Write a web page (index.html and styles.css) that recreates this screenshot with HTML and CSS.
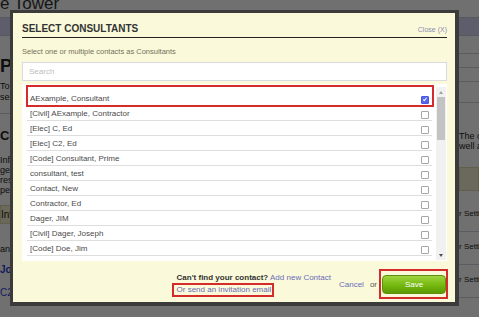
FILE: index.html
```html
<!DOCTYPE html>
<html lang="en">
<head>
    <meta charset="UTF-8">
    <meta name="viewport" content="width=device-width, initial-scale=1.0">
    <title>Select Consultants</title>
    <link rel="stylesheet" href="styles.css">
</head>
<body>

    <div class="page">
        <div class="page-title">e Tower</div>
        <div class="page-nav"></div>
        <div class="page-body">
            <div class="page-left">
                <h2>Project Consultants</h2>
                <p class="intro">To add consultants to this project<br>send them an invitation email.</p>
                <h3>Consultants</h3>
                <p class="small">Information about consultants<br>general contractors and the<br>responsible parties that are<br>performing the work.</p>
                <div class="tan-box">Internal notes</div>
                <p class="small spaced">and others</p>
                <a class="page-link bold" href="#">Joseph Dager</a>
                <a class="page-link" href="#">C2</a>
            </div>
            <div class="page-right">
                <div class="right-row"></div>
                <div class="right-row"></div>
                <div class="right-row"></div>
                <div class="right-row tall"></div>
                <p class="small">The consultants listed here<br>well as everybody else</p>
                <div class="tan-box wide"></div>
                <div class="right-row text">r Settings</div>
                <div class="right-row text">r Settings</div>
                <div class="right-row text">r Settings</div>
            </div>
        </div>
    </div>

    <div class="modal">
        <div class="modal-head">
            <h1>SELECT CONSULTANTS</h1>
            <a href="#" class="close">Close (X)</a>
        </div>
        <p class="hint">Select one or multiple contacts as Consultants</p>
        <input type="text" class="search" placeholder="Search">

        <div class="list-wrap">
            <ul class="contact-list">
                <li class="marked"><span>AExample, Consultant</span><span class="check checked"></span></li>
                <li><span>[Civil] AExample, Contractor</span><span class="check"></span></li>
                <li><span>[Elec] C, Ed</span><span class="check"></span></li>
                <li><span>[Elec] C2, Ed</span><span class="check"></span></li>
                <li><span>[Code] Consultant, Prime</span><span class="check"></span></li>
                <li><span>consultant, test</span><span class="check"></span></li>
                <li><span>Contact, New</span><span class="check"></span></li>
                <li><span>Contractor, Ed</span><span class="check"></span></li>
                <li><span>Dager, JIM</span><span class="check"></span></li>
                <li><span>[Civil] Dager, Joseph</span><span class="check"></span></li>
                <li><span>[Code] Doe, Jim</span><span class="check"></span></li>
            </ul>
            <div class="scrollbar">
                <span class="arrow up"></span>
                <div class="thumb"></div>
                <span class="arrow down"></span>
            </div>
        </div>

        <div class="modal-foot">
            <div class="foot-text">
                <div><b>Can't find your contact?</b> <a href="#">Add new Contact</a></div>
                <a href="#" class="invite marked-inline">Or send an invitation email</a>
            </div>
            <a href="#" class="cancel">Cancel</a>
            <span class="or">or</span>
            <button class="save-btn">Save</button>
        </div>
    </div>

</body>
</html>
```

FILE: styles.css
```css
body {
    margin: 0;
    font-family: "Liberation Sans", Arial, sans-serif;
    background: #fff;
    overflow: hidden;
    height: 317px;
}
.page {
    width: 479px;
    height: 317px;
    overflow: hidden;
    color: #222;
}
.page-title {
    font-size: 17px;
    line-height: 17px;
    margin-top: -5px;
    color: #333;
}
.page-nav {
    height: 17px;
    margin-top: 5px;
    background: #d4d4f4;
    border-top: 1px solid #c8c8e0;
    border-bottom: 1px solid #c8c8e0;
}
.page-body {
    display: flex;
    justify-content: space-between;
}
.page-left {
    width: 200px;
}
.page-left h2 {
    font-size: 18px;
    margin: 20px 0 4px;
}
.page-left h3 {
    font-size: 13px;
    margin: 0 0 12px;
    padding-top: 14px;
    border-top: 1px solid #ccc;
}
.intro {
    font-size: 9px;
    line-height: 11px;
    margin: 0 0 10px;
}
.small {
    font-size: 9px;
    line-height: 10px;
    margin: 0 0 10px;
}
.spaced {
    margin-top: 20px;
}
.tan-box {
    background: #f2eed0;
    border: 1px solid #dcd6a8;
    font-size: 10px;
    padding: 3px 0;
    margin-bottom: 18px;
}
.page-link {
    display: block;
    color: #2a3cd8;
    font-size: 10px;
    margin-bottom: 12px;
    text-decoration: none;
}
.page-link.bold {
    font-weight: bold;
}
.page-right {
    width: 20px;
    padding-top: 4px;
}
.page-right .small {
    margin: 28px 0 16px;
    white-space: nowrap;
}
.right-row {
    height: 13px;
    border-bottom: 1px solid #cfcfe0;
}
.right-row.tall {
    height: 20px;
}
.right-row.text {
    height: 20px;
    line-height: 30px;
    padding-bottom: 12px;
    font-size: 8px;
    white-space: nowrap;
}
.tan-box.wide {
    height: 16px;
    margin: 0 0 8px;
}

/* modal; the wide shadow dims the page behind it */
.modal {
    position: absolute;
    left: 10px;
    top: 10px;
    width: 425px;
    height: 273px;
    padding: 10px 8px 6px 9px;
    background: #fafadb;
    border: solid #3b3b3b;
    border-width: 3px 4px 4px 3px;
    box-shadow: 0 0 0 600px #0000008f;
    font-size: 8px;
    color: #444;
}
.modal-head {
    display: flex;
    justify-content: space-between;
    align-items: center;
    border-bottom: 1px solid #222;
    padding-bottom: 2px;
}
.modal-head h1 {
    margin: 0;
    font-size: 10px;
    line-height: 12px;
    color: #333;
}
.close {
    font-size: 7px;
    color: #8a8ab0;
    text-decoration: none;
}
.hint {
    margin: 9px 0 0;
    font-size: 7.5px;
    line-height: 10px;
    color: #76705a;
}
.search {
    display: block;
    box-sizing: border-box;
    width: 100%;
    height: 19px;
    margin: 5px 0 3px;
    padding: 0 6px;
    border: 1px solid #dadae4;
    background: #fff;
    font-family: inherit;
    font-size: 8px;
    outline: none;
}
.search::placeholder {
    color: #bcbcbc;
}
.list-wrap {
    display: flex;
    height: 177px;
    background: #fff;
}
.contact-list {
    flex: 1;
    list-style: none;
    margin: 0;
    padding: 7px 4px 0 5px;
    overflow: hidden;
}
.contact-list li {
    display: flex;
    justify-content: space-between;
    align-items: center;
    height: 14px;
    padding: 0 3px;
    border-bottom: 1px solid #dedede;
    color: #4a4a4a;
    position: relative;
}
.contact-list li .check {
    margin-top: 3px;
}
.marked::before {
    content: "";
    position: absolute;
    left: -1px;
    right: -2px;
    top: -6px;
    bottom: -2px;
    border: 2px solid #d62b2b;
}
.check {
    width: 6px;
    height: 6px;
    border: 1px solid #a6a6a6;
    border-radius: 1px;
    background: #fff;
}
.check.checked {
    border-color: #4b5ae0;
    background: #5866ee;
    position: relative;
}
.check.checked::after {
    content: "";
    position: absolute;
    left: 2px;
    top: 0;
    width: 1px;
    height: 3px;
    border: solid #fff;
    border-width: 0 1px 1px 0;
    transform: rotate(40deg);
}
.scrollbar {
    width: 10px;
    margin: 3px 1px 1px 0;
    background: #f1f1f1;
    display: flex;
    flex-direction: column;
    align-items: center;
}
.arrow {
    width: 0;
    height: 0;
    border-left: 2.5px solid transparent;
    border-right: 2.5px solid transparent;
    margin: 4px 0 3px;
}
.arrow.up {
    border-bottom: 3px solid #a3a3a3;
}
.arrow.down {
    border-top: 3px solid #505050;
    margin-top: auto;
}
.thumb {
    width: 8px;
    height: 43px;
    background: #c3c3c3;
}

/* footer */
.modal-foot {
    display: flex;
    justify-content: flex-end;
    align-items: center;
    margin-top: 11px;
    padding-right: 1px;
}
.foot-text {
    line-height: 12px;
}
.foot-text b {
    color: #333;
}
.foot-text a,
.cancel {
    color: #6a6ab8;
    text-decoration: none;
}
.invite {
    position: relative;
}
.marked-inline::after,
.save-btn::after {
    content: "";
    position: absolute;
    border: 2px solid #d62b2b;
}
.marked-inline::after {
    left: -5px;
    right: -3px;
    top: -2px;
    bottom: -3px;
}
.cancel {
    margin-left: 8px;
}
.or {
    margin: 0 5px 0 6px;
    color: #555;
}
.save-btn {
    position: relative;
    width: 64px;
    height: 19px;
    border: 1px solid #5d9010;
    border-radius: 4px;
    background: linear-gradient(#9ed43e, #74b80e 55%, #5c9a02);
    color: #fff;
    font-family: inherit;
    font-size: 8px;
    padding: 0;
}
.save-btn::after {
    left: -4px;
    right: -3px;
    top: -7px;
    bottom: -6px;
}
```
